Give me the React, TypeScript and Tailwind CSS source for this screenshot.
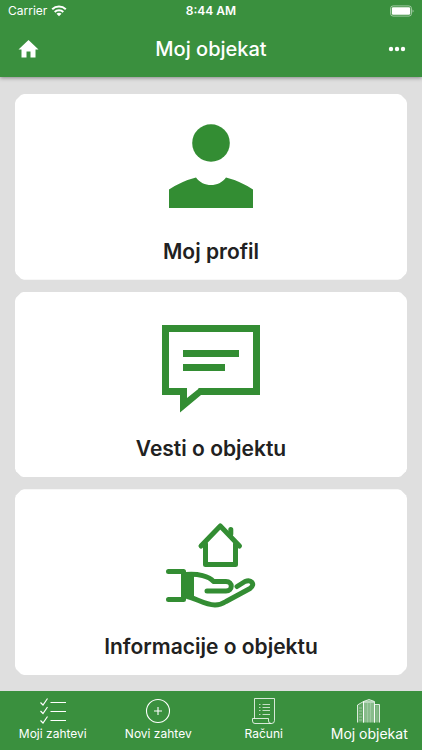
import React from "react";

const chamfer =
  "[clip-path:polygon(9px_0,calc(100%_-_9px)_0,calc(100%_-_6px)_1px,calc(100%_-_1px)_6px,100%_9px,100%_calc(100%_-_9px),calc(100%_-_1px)_calc(100%_-_6px),calc(100%_-_6px)_calc(100%_-_1px),calc(100%_-_9px)_100%,9px_100%,6px_calc(100%_-_1px),1px_calc(100%_-_6px),0_calc(100%_-_9px),0_9px,1px_6px,6px_1px)]";

function WifiIcon() {
  return (
    <svg className="h-3 w-4" viewBox="0 0 16 12" fill="none" stroke="white" strokeWidth="2" aria-hidden="true">
      <path d="M1.200 4.300C5 .7 11 .7 14.800 4.300" />
      <path d="M3.700 7C6.100 4.700 9.900 4.700 12.300 7" />
      <path d="M8 11.300 5.500 8.800C6.900 7.500 9.100 7.500 10.500 8.800Z" fill="white" stroke="none" />
    </svg>
  );
}

function BatteryIcon() {
  return (
    <svg className="h-3 w-6" viewBox="0 0 24 12" fill="none" aria-hidden="true">
      <rect x=".5" y=".9" width="21" height="10.200" rx="2.600" stroke="white" strokeOpacity=".5" />
      <rect x="1.800" y="2.200" width="18.400" height="7.600" rx="1.400" fill="white" />
      <path d="M22.600 4.400c1.300.6 1.300 2.600 0 3.200Z" fill="white" fillOpacity=".6" />
    </svg>
  );
}

function ProfileIcon() {
  return (
    <svg className="h-24 w-28" viewBox="0 0 112 96" fill="#338d33" aria-hidden="true">
      <circle cx="56" cy="25" r="18.800" />
      <path d="M14 90V71.500Q27 63 41 59.500C48 69.500 64 69.500 71 59.500Q85 63 98 71.500V90Z" />
    </svg>
  );
}

function NewsIcon() {
  return (
    <svg
      className="h-24 w-28 overflow-visible"
      viewBox="0 0 112 96"
      fill="none"
      stroke="#338d33"
      strokeWidth="7"
      aria-hidden="true"
    >
      <path d="M28.500 76.500H10.500V13.500H101.500V76.500H43.500" />
      <path d="M25 73V97.500L46 80H52V73H44.500L32 83V73Z" fill="#338d33" stroke="none" />
      <path d="M28 38.500H84M28 52.500H70" />
    </svg>
  );
}

function HouseIcon() {
  return (
    <svg
      className="h-24 w-28"
      viewBox="0 -3 112 96"
      fill="none"
      stroke="#338d33"
      strokeWidth="5"
      strokeLinecap="round"
      strokeLinejoin="round"
      aria-hidden="true"
    >
      <path d="M46 30 65.300 10 84.500 30" />
      <path d="M50.500 28V48.500H80.500V28M75.800 18V13.500" />
      <path d="M13.500 55.500H28.500V83.500H13.500" />
      <path d="M28.500 58.500H38V80.500H28.500Z" fill="#338d33" strokeWidth="2" />
      <path d="M31 58.500C43 57.500 54 60 58.500 65.500H71C78 65.500 78 75 71 75H52" />
      <path d="M31 80C43 83 49 88.500 60 89C64 89 67 88 71 85.500L95 72.500C101 68 96 63 90 65.500L82 70.500" />
    </svg>
  );
}

function ChecklistIcon() {
  return (
    <svg className="h-7 w-7" viewBox="0 0 28 28" fill="none" stroke="white" strokeWidth="1.200" aria-hidden="true">
      <path d="M1.500 5.500 4 8 8.500 1.500M1.500 14 4 16.500 8.500 10M1.500 23.500 4 26 8.500 19.500" />
      <path d="M11.500 5.500H27M11.500 14.500H27M11.500 23.500H27" />
    </svg>
  );
}

function AddIcon() {
  return (
    <svg className="h-7 w-7" viewBox="0 0 28 28" fill="none" stroke="white" strokeWidth="1.100" aria-hidden="true">
      <circle cx="14" cy="14" r="11.500" />
      <path d="M10 14H18M14 10V18" />
    </svg>
  );
}

function BillIcon() {
  return (
    <svg className="h-7 w-7" viewBox="0 0 28 28" fill="none" stroke="white" strokeOpacity=".8" aria-hidden="true">
      <path d="M4.500 21.500V1.500H24.500V23.500Q24.500 26.500 21.500 26.500H5Q2.500 26.500 2.500 24V21.500H18.500V24Q18.500 26.500 21.500 26.500" />
      <path
        d="M9 7.500H10.500M9 10.500H10.500M9 13.500H10.500M9 17.500H10.500M12.500 7.500H20M12.500 10.500H20M12.500 13.500H20M12.500 17.500H20"
        strokeOpacity=".7"
      />
    </svg>
  );
}

function BuildingsIcon() {
  return (
    <svg className="h-7 w-7" viewBox="0 0 28 28" fill="none" stroke="white" strokeOpacity=".8" aria-hidden="true">
      <path d="M2.500 25.500V8L8.500 4.500V25.500" fill="white" fillOpacity=".2" />
      <path d="M8.500 25.500V4.500L14 2.500 19.500 4.500V25.500M9 5H19" fill="white" fillOpacity=".4" />
      <path d="M19.500 25.500V7.500H24.500V25.500" fill="white" fillOpacity=".3" />
      <path d="M4 11H7M4 14H7M4 17H7M4 20H7M4 23H7" strokeOpacity=".35" />
      <path d="M12.500 6V25.500M15.500 6V25.500M22 9V25.500" strokeOpacity=".2" />
    </svg>
  );
}

const cards = [
  { title: "Moj profil", icon: <ProfileIcon /> },
  { title: "Vesti o objektu", icon: <NewsIcon /> },
  { title: "Informacije o objektu", icon: <HouseIcon /> },
];

const tabs = [
  { title: "Moji zahtevi", icon: <ChecklistIcon />, active: false },
  { title: "Novi zahtev", icon: <AddIcon />, active: false },
  { title: "Računi", icon: <BillIcon />, active: false },
  { title: "Moj objekat", icon: <BuildingsIcon />, active: true },
];

export default function App() {
  return (
    <div className="flex min-h-screen flex-col bg-[#dfdfdf] font-['Inter',sans-serif]">
      <header className="relative bg-[#3a903e] text-white shadow-[0_1px_4px_rgba(0,0,0,0.4)]">
        <div className="grid h-[22px] grid-cols-[1fr_auto_1fr] items-center px-2 text-xs">
          <div className="flex items-center gap-1">
            <span>Carrier</span>
            <WifiIcon />
          </div>
          <span className="font-semibold">8:44 AM</span>
          <div className="flex justify-end">
            <BatteryIcon />
          </div>
        </div>
        <div className="grid h-[55px] grid-cols-[1fr_auto_1fr] items-center px-4 pb-0.5">
          <button type="button" aria-label="Početna" className="w-6">
            <svg className="h-6 w-6" viewBox="0 0 24 24" fill="white" aria-hidden="true">
              <path d="M10.500 20.500v-6h4v6h5v-8h3L12.500 3 2.500 12.500h3v8z" />
            </svg>
          </button>
          <h1 className="text-xl font-medium">Moj objekat</h1>
          <button type="button" aria-label="Više" className="w-6 justify-self-end">
            <svg className="h-6 w-6" viewBox="0 0 24 24" fill="white" aria-hidden="true">
              <circle cx="9" cy="12" r="2.200" />
              <circle cx="15" cy="12" r="2.200" />
              <circle cx="21" cy="12" r="2.200" />
            </svg>
          </button>
        </div>
      </header>

      <main className="grid flex-1 auto-rows-fr gap-3 px-[15px] pt-[17px] pb-4">
        {cards.map((card) => (
          <button
            key={card.title}
            type="button"
            className={`flex flex-col items-center justify-center gap-[26px] bg-white pt-2 text-[#212121] ${chamfer}`}
          >
            {card.icon}
            <span className="text-[21px] leading-6 font-semibold">{card.title}</span>
          </button>
        ))}
      </main>

      <nav className="grid h-[59px] grid-cols-4 bg-[#3a903e] text-white">
        {tabs.map((tab) => (
          <button key={tab.title} type="button" className="flex flex-col items-center gap-px pt-1.5">
            {tab.icon}
            <span className={tab.active ? "text-sm leading-4 whitespace-nowrap" : "text-xs whitespace-nowrap"}>
              {tab.title}
            </span>
          </button>
        ))}
      </nav>
    </div>
  );
}
